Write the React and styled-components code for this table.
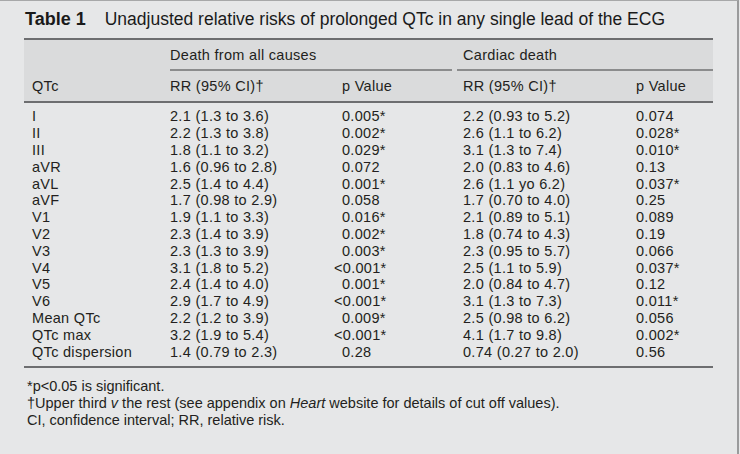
import React from 'react';
import styled, { createGlobalStyle } from 'styled-components';

const Global = createGlobalStyle`
  html, body { margin: 0; padding: 0; background: #e6e7e8; }
  body { font-family: "Liberation Sans", Arial, sans-serif; color: #231f20; }
`;

// 전체 페이지 박스
const Page = styled.div`
  width: 737px;
  height: 453px;
  background: #e6e7e8;
  border-top: 1px solid #a7a8a9;
  border-right: 2px solid #9a9b9c;
  box-sizing: content-box;
`;

const Title = styled.div`
  height: 37px;
  display: flex;
  align-items: center;
  padding-left: 25px;
  font-size: 17.5px;
  color: #1a1a1a;
  white-space: nowrap;
`;

const TitleLabel = styled.span`
  font-weight: bold;
  font-size: 18px;
  margin-right: 19px;
`;

const Table = styled.div`
  margin-left: 24px;
  width: 689px;
  font-size: 14.5px;
  letter-spacing: 0.3px;
`;

const HeadBand = styled.div`
  background: #dadbdc;
  border-top: 2px solid #6d6e70;
  border-bottom: 2px solid #6d6e70;
`;

const Row = styled.div`
  display: grid;
  grid-template-columns: 138px 172px 121px 173px 1fr;
  padding-left: 8px;
  height: ${(p) => p.h || 16.8}px;
  align-items: center;
  white-space: nowrap;
`;

const GroupCell = styled.div`
  grid-column: ${(p) => p.span};
  align-self: stretch;
  display: flex;
  align-items: center;
  border-bottom: 2px solid #8b8c8d;
  margin-left: ${(p) => p.ml}px;
  margin-right: ${(p) => p.mr}px;
  padding-left: ${(p) => -p.ml}px;
`;

const Cell = styled.div`
  margin-left: ${(p) => (p.hang ? -8 : 0)}px;
`;

const Body = styled.div`
  padding: 5px 0 6px;
  border-bottom: 2px solid #6d6e70;
`;

const Footer = styled.div`
  padding: 10px 0 0 3px;
  font-size: 14.5px;
  line-height: 17px;
  letter-spacing: 0;
`;

const rows = [
  ['I', '2.1 (1.3 to 3.6)', '0.005*', '2.2 (0.93 to 5.2)', '0.074'],
  ['II', '2.2 (1.3 to 3.8)', '0.002*', '2.6 (1.1 to 6.2)', '0.028*'],
  ['III', '1.8 (1.1 to 3.2)', '0.029*', '3.1 (1.3 to 7.4)', '0.010*'],
  ['aVR', '1.6 (0.96 to 2.8)', '0.072', '2.0 (0.83 to 4.6)', '0.13'],
  ['aVL', '2.5 (1.4 to 4.4)', '0.001*', '2.6 (1.1 yo 6.2)', '0.037*'],
  ['aVF', '1.7 (0.98 to 2.9)', '0.058', '1.7 (0.70 to 4.0)', '0.25'],
  ['V1', '1.9 (1.1 to 3.3)', '0.016*', '2.1 (0.89 to 5.1)', '0.089'],
  ['V2', '2.3 (1.4 to 3.9)', '0.002*', '1.8 (0.74 to 4.3)', '0.19'],
  ['V3', '2.3 (1.3 to 3.9)', '0.003*', '2.3 (0.95 to 5.7)', '0.066'],
  ['V4', '3.1 (1.8 to 5.2)', '<0.001*', '2.5 (1.1 to 5.9)', '0.037*'],
  ['V5', '2.4 (1.4 to 4.0)', '0.001*', '2.0 (0.84 to 4.7)', '0.12'],
  ['V6', '2.9 (1.7 to 4.9)', '<0.001*', '3.1 (1.3 to 7.3)', '0.011*'],
  ['Mean QTc', '2.2 (1.2 to 3.9)', '0.009*', '2.5 (0.98 to 6.2)', '0.056'],
  ['QTc max', '3.2 (1.9 to 5.4)', '<0.001*', '4.1 (1.7 to 9.8)', '0.002*'],
  ['QTc dispersion', '1.4 (0.79 to 2.3)', '0.28', '0.74 (0.27 to 2.0)', '0.56'],
];

export default function App() {
  return (
    <>
      <Global />
      <Page>
        <Title>
          <TitleLabel>Table 1</TitleLabel>
          Unadjusted relative risks of prolonged QTc in any single lead of the ECG
        </Title>
        <Table>
          <HeadBand>
            <Row h={31}>
              <div />
              <GroupCell span="2 / 4" ml={0} mr={11}>Death from all causes</GroupCell>
              <GroupCell span="4 / 6" ml={-6} mr={0}>Cardiac death</GroupCell>
            </Row>
            <Row h={30}>
              <div>QTc</div>
              <div>RR (95% CI)†</div>
              <div>p Value</div>
              <div>RR (95% CI)†</div>
              <div>p Value</div>
            </Row>
          </HeadBand>
          <Body>
            {rows.map((r) => (
              <Row key={r[0]}>
                <Cell>{r[0]}</Cell>
                <Cell>{r[1]}</Cell>
                <Cell hang={r[2].startsWith('<')}>{r[2]}</Cell>
                <Cell>{r[3]}</Cell>
                <Cell>{r[4]}</Cell>
              </Row>
            ))}
          </Body>
          <Footer>
            <div>*p&lt;0.05 is significant.</div>
            <div>
              †Upper third <i>v</i> the rest (see appendix on <i>Heart</i> website for details of cut off values).
            </div>
            <div>CI, confidence interval; RR, relative risk.</div>
          </Footer>
        </Table>
      </Page>
    </>
  );
}
